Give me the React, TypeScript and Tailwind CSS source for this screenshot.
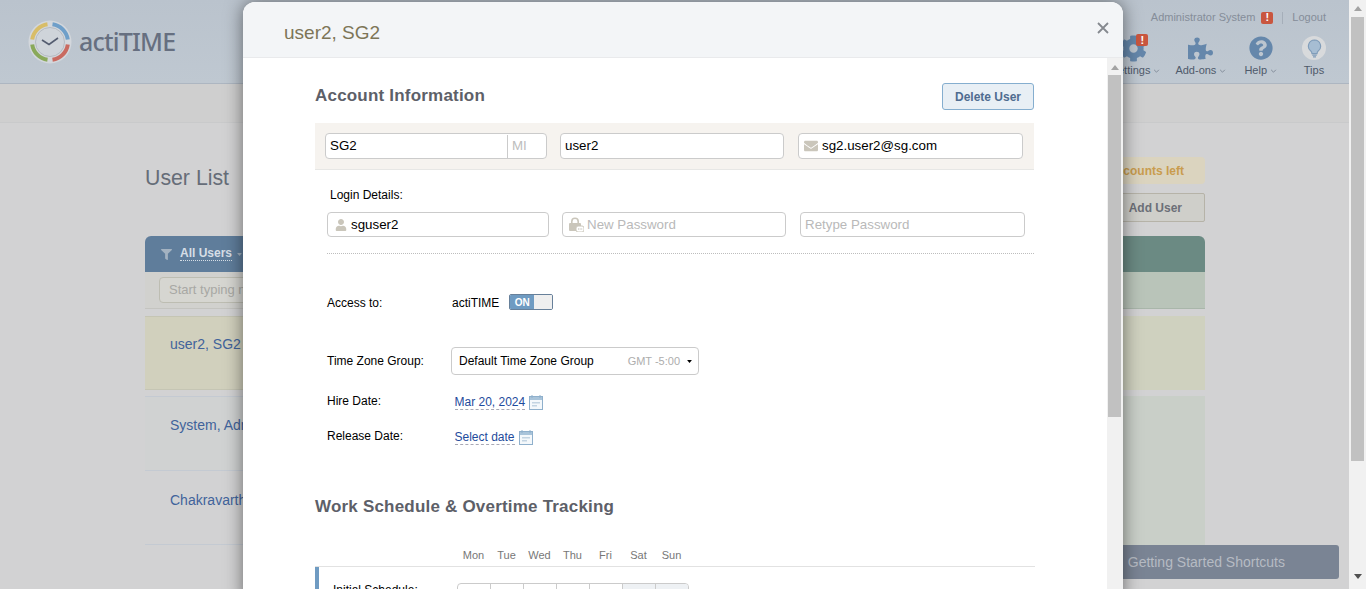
import { FaCog, FaPuzzlePiece, FaQuestionCircle, FaUser, FaEnvelope, FaFilter } from "react-icons/fa";

function Bang({ className }: { className: string }) {
  return <span className={"flex items-center justify-center rounded-[2px] bg-[#c9563f] text-white font-bold text-[11px] leading-none " + className}>!</span>;
}

function Caret({ className }: { className: string }) {
  return (
    <svg viewBox="0 0 8 5" className={className} width="7" height="4">
      <path d="M1 1l3 3 3-3" fill="none" stroke="currentColor" strokeWidth="1.1" />
    </svg>
  );
}

function Arrow({ up, className }: { up?: boolean; className: string }) {
  return (
    <svg viewBox="0 0 8 5" width="8" height="5" className={className}>
      <path d={up ? "M4 0L8 5H0z" : "M0 0h8L4 5z"} fill="currentColor" />
    </svg>
  );
}

function Logo() {
  return (
    <svg viewBox="0 0 44 44" width="44" height="44" className="shrink-0">
      <circle cx="22" cy="22" r="21.5" fill="#d3d7dc" />
      <g fill="none" strokeWidth="4">
        <path d="M4.2 19.5A18 18 0 0 1 19.5 4.2" stroke="#d8bd68" />
        <path d="M24.5 4.2A18 18 0 0 1 39.8 19.5" stroke="#6f9fc9" />
        <path d="M39.8 24.5A18 18 0 0 1 24.5 39.8" stroke="#c96a60" />
        <path d="M19.5 39.8A18 18 0 0 1 4.2 24.5" stroke="#8aa95a" />
      </g>
      <circle cx="22" cy="22" r="14.5" fill="#cfd4da" stroke="#aeb4bb" strokeWidth="0.8" />
      <path d="M14 20l7 4.5L30 18" fill="none" stroke="#545c70" strokeWidth="1.6" />
    </svg>
  );
}

function Calendar() {
  return (
    <svg viewBox="0 0 14 16" width="14" height="16" className="shrink-0">
      <rect x="0.5" y="2.5" width="13" height="13" fill="#f4f8fb" stroke="#8fb0cc" />
      <rect x="1" y="3" width="12" height="3" fill="#a9c4da" />
      <path d="M3 1v3M11 1v3" stroke="#8fb0cc" />
      <rect x="3" y="8" width="8" height="1.5" fill="#c3d4e2" />
      <rect x="3" y="11" width="5" height="1.5" fill="#c3d4e2" />
    </svg>
  );
}

function Bulb() {
  return (
    <svg viewBox="0 0 16 20" width="15" height="19">
      <path d="M8 1a6.5 6.5 0 0 0-4 11.6c.9.8 1.2 1.6 1.3 2.9h5.4c.1-1.3.4-2.1 1.3-2.9A6.5 6.5 0 0 0 8 1z" fill="#a6bdd3" stroke="#7f9cb9" strokeWidth="1.2" />
      <path d="M5.6 17h4.8M6.4 19h3.2" stroke="#7f9cb9" strokeWidth="1.3" />
    </svg>
  );
}

function LockIcon() {
  return (
    <svg viewBox="0 0 16 15" width="16" height="15" className="shrink-0">
      <path d="M3 6V4.5a4 4 0 0 1 8 0V6h-1.6V4.5a2.4 2.4 0 0 0-4.8 0V6z" fill="#cac6bb" />
      <rect x="1" y="6" width="12" height="8" rx="1" fill="#cac6bb" />
      <rect x="8" y="9" width="8" height="6" rx="2" fill="#fff" stroke="#cac6bb" />
      <path d="M10 12h.8M11.7 12h.8M13.4 12h.8" stroke="#a9a59a" />
    </svg>
  );
}

function NavItem({ icon, label, caret }: { icon: React.ReactNode; label: string; caret?: boolean }) {
  return (
    <div className="flex flex-col items-center">
      <div className="h-[30px] flex items-center justify-center">{icon}</div>
      <div className="mt-[1px] flex items-center gap-[3px] text-[11px] leading-[13px] text-[#4f5a6b]">
        {label}
        {caret && <Caret className="text-[#7c8694]" />}
      </div>
    </div>
  );
}

function Box({ className, children }: { className: string; children?: React.ReactNode }) {
  return <div className={"flex items-center bg-white border border-[#cbcbcb] rounded-[4px] text-[13.33px] " + className}>{children}</div>;
}

function Label({ children, className }: { children: React.ReactNode; className: string }) {
  return <div className={"text-[12px] leading-[14px] text-black " + className}>{children}</div>;
}

const days = ["Mon", "Tue", "Wed", "Thu", "Fri", "Sat", "Sun"];

export default function App() {
  return (
    <div className="relative flex h-[589px] w-[1366px] overflow-hidden font-['Liberation_Sans',Arial,sans-serif]">
      {/* page behind the dialog */}
      <div className="flex h-full w-[1349px] flex-col bg-[#d2d2d3]">
        <header className="flex h-[84px] shrink-0 justify-between border-b border-[#adb6c1] bg-gradient-to-b from-[#bac3cd] to-[#bfc8d1] pl-[28px] pr-[23px]">
          <div className="mt-[20px] flex h-[44px] items-center gap-[7px]">
            <Logo />
            <span className="mb-[1px] font-['Noto_Sans',sans-serif] text-[25px] font-medium leading-none tracking-[-0.8px] text-[#666f80]">actiTIME</span>
          </div>
          <div className="flex flex-col items-end">
            <div className="mt-[11px] flex h-[13px] items-center text-[11px] text-[#858d99]">
              Administrator System
              <Bang className="ml-[6px] h-[12px] w-[12px]" />
              <span className="mx-[9px] h-[12px] w-px bg-[#a5aeb9]" />
              Logout
            </div>
            <div className="mt-[9px] flex items-start">
              <div className="relative">
                <NavItem caret label="Settings" icon={<span className="pr-[4px]"><FaCog size={27} color="#6587ab" /></span>} />
                <Bang className="absolute right-[12px] top-[1px] h-[12px] w-[12px]" />
              </div>
              <div className="ml-[15px]">
                <NavItem caret label="Add-ons" icon={<FaPuzzlePiece size={25} color="#6587ab" />} />
              </div>
              <div className="ml-[18px]">
                <NavItem caret label="Help" icon={<FaQuestionCircle size={24} color="#6587ab" />} />
              </div>
              <div className="ml-[25px]">
                <NavItem
                  label="Tips"
                  icon={
                    <span className="flex h-[24px] w-[24px] items-center justify-center rounded-full bg-[#d8dadc]">
                      <Bulb />
                    </span>
                  }
                />
              </div>
            </div>
          </div>
        </header>
        <div className="h-[39px] shrink-0 border-b border-[#c9cacb] bg-[#cfcfcf]" />
        <main className="w-[1205px] pl-[145px]">
          <div className="flex items-start justify-between pt-[34px]">
            <h1 className="mt-[8px] text-[21.3px] leading-[26px] text-[#666d78]">User List</h1>
            <div className="flex flex-col items-end">
              <div className="flex h-[27px] w-[200px] items-center justify-end rounded-[4px] bg-[#dbd4bf] pr-[21px] text-[12px] font-bold text-[#c99c4e]">
                accounts left
              </div>
              <div className="mt-[9px] flex h-[29px] w-[100px] items-center justify-end rounded-[2px] border border-[#b6b3a8] bg-[#cfcfca] pr-[22px] text-[12px] font-bold text-[#6c6f78]">
                Add User
              </div>
            </div>
          </div>
          <div className="mt-[14px] flex">
            <div className="w-[530px]">
              <div className="flex h-[36px] items-center rounded-tl-[6px] bg-[#5f7d9b] pl-[16px] text-[12px] font-bold text-[#d6dee6]">
                <FaFilter size={11} color="#a3b2c1" />
                <span className="ml-[8px] border-b border-dotted border-[#d6dee6] leading-[13px]">All Users</span>
                <Arrow className="ml-[5px] h-[3px] w-[5px] text-[#a3b2c1]" />
              </div>
              <div className="flex h-[37px] items-center border-b border-[#c4c4c0] bg-[#d1d1ce] pl-[14px]">
                <div className="flex h-[26px] w-[200px] items-center rounded-[4px] border border-[#bdbdb2] bg-[#d6d6d1] pl-[9px] text-[13px] text-[#a8a8a4]">
                  Start typing name
                </div>
              </div>
              <div className="mt-[7px] h-[74px] border-y border-[#c5c5b4] bg-[#d1d0bd] pl-[25px] pt-[18px] text-[14px] leading-[18px] text-[#41639b]">user2, SG2</div>
              <div className="mt-[6px] h-[75px] border-y border-[#c4cad2] bg-[#d0d2d2] pl-[25px] pt-[19px] text-[14px] leading-[18px] text-[#41639b]">System, Administrator</div>
              <div className="h-[74px] border-b border-[#c4cad2] pl-[25px] pt-[20px] text-[14px] leading-[18px] text-[#41639b]">Chakravarthi</div>
            </div>
            <div className="flex-1">
              <div className="h-[36px] rounded-tr-[6px] bg-[#6b8a83]" />
              <div className="h-[37px] border-b border-[#a9b6aa] bg-[#b9c4b9]" />
              <div className="mt-[7px] h-[74px] bg-[#cfd1bf]" />
              <div className="mt-[6px] h-[149px] bg-[#c9cfc8]" />
            </div>
          </div>
        </main>
      </div>

      {/* browser scrollbar */}
      <div className="flex h-full w-[17px] flex-col items-center bg-[#f1f1f1]">
        <Arrow up className="mt-[6px] text-[#a3a3a3]" />
        <div className="mt-[6px] h-[444px] w-[13px] bg-[#c1c1c1]" />
        <Arrow className="mt-[113px] text-[#505050]" />
      </div>

      {/* shortcuts tab */}
      <div className="absolute left-[1000px] top-[545px] flex h-[34px] w-[339px] items-center justify-end rounded-[3px] bg-[#7a8494] pr-[54px] text-[14px] text-[#b6bbc3]">
        Getting Started Shortcuts
      </div>

      {/* dialog */}
      <div className="absolute left-[243px] top-[2px] flex h-[600px] w-[880px] flex-col rounded-t-[12px] bg-white shadow-[0_0_18px_rgba(0,0,0,0.5)]">
        <div className="flex h-[56px] shrink-0 items-center justify-between rounded-t-[12px] border-b border-[#e9eaec] bg-[#f3f5f7] pl-[41px] pr-[14px]">
          <span className="mt-[7px] text-[19px] leading-[22px] text-[#7d7557]">user2, SG2</span>
          <svg viewBox="0 0 12 12" width="12" height="12" className="mb-[3px]">
            <path d="M1 1l10 10M11 1L1 11" stroke="#85898f" strokeWidth="1.8" />
          </svg>
        </div>
        <div className="flex min-h-0 flex-1">
          <div className="w-[864px] overflow-hidden pl-[72px] pr-[73px]">
            <div className="flex h-[65px] items-start justify-between pt-[25px]">
              <h2 className="pt-[3px] text-[17px] font-bold leading-[20px] tracking-[0.2px] text-[#5d6068]">Account Information</h2>
              <div className="flex h-[27px] w-[92px] items-center justify-center rounded-[3px] border border-[#85aecf] bg-[#e8eff5] text-[12px] font-bold text-[#4f6c90]">Delete User</div>
            </div>
            <div className="flex h-[47px] items-center border-b border-[#e7e7e5] bg-[#f6f3ef] pb-[1px] pl-[10px]">
              <Box className="h-[26px] w-[222px] overflow-hidden pt-[1px]">
                <span className="flex-1 pl-[4px] text-black">SG2</span>
                <span className="flex h-full w-[39px] items-center border-l border-[#cbcbcb] pl-[4px] text-[#bdbdbd]">MI</span>
              </Box>
              <Box className="ml-[13px] h-[26px] w-[224px] pl-[4px] pt-[1px] text-black">user2</Box>
              <Box className="ml-[14px] h-[26px] w-[225px] pl-[5px] pt-[1px] text-black">
                <FaEnvelope size={14} color="#cac6bb" />
                <span className="ml-[4px]">sg2.user2@sg.com</span>
              </Box>
            </div>
            <Label className="ml-[15px] mt-[18px]">Login Details:</Label>
            <div className="ml-[12px] mt-[10px] flex">
              <Box className="h-[25px] w-[222px] pl-[7px] text-black">
                <FaUser size={12} color="#cac6bb" />
                <span className="ml-[4px]">sguser2</span>
              </Box>
              <Box className="ml-[13px] h-[25px] w-[224px] pl-[5px] text-[#b9b9b9]">
                <LockIcon />
                <span className="ml-[3px]">New Password</span>
              </Box>
              <Box className="ml-[14px] h-[25px] w-[225px] pl-[4px] text-[#b9b9b9]">Retype Password</Box>
            </div>
            <div className="ml-[12px] mt-[16px] border-b border-dotted border-[#bdbdbd]" />

            <div className="ml-[12px] mt-[40px] flex h-[16px] items-center">
              <Label className="mt-[1px] w-[125px]">Access to:</Label>
              <span className="mt-[1px] text-[12px] text-black">actiTIME</span>
              <div className="ml-[10px] flex h-[16px] w-[44px] overflow-hidden rounded-[2px] border border-[#67809a]">
                <span className="flex w-[24px] items-center justify-center bg-[#6f9bc2] text-[10px] font-bold text-white">ON</span>
                <span className="flex-1 bg-[#efefef]" />
              </div>
            </div>

            <div className="ml-[12px] mt-[37px] flex h-[28px] items-center">
              <Label className="w-[124px]">Time Zone Group:</Label>
              <div className="flex h-[28px] w-[248px] items-center rounded-[4px] border border-[#cbcbcb] pl-[7px] pr-[6px] text-[12px] text-black">
                <span className="flex-1">Default Time Zone Group</span>
                <span className="text-[11px] text-[#adadad]">GMT -5:00</span>
                <Arrow className="ml-[7px] h-[3px] w-[5px] text-black" />
              </div>
            </div>

            <div className="ml-[12px] mt-[18px] flex h-[18px] items-center">
              <Label className="mb-[3px] w-[127.5px]">Hire Date:</Label>
              <span className="border-b border-dashed border-[#a9a9b5] text-[12px] leading-[14px] text-[#1e4b9c]">Mar 20, 2024</span>
              <span className="ml-[4px]"><Calendar /></span>
            </div>
            <div className="ml-[12px] mt-[17px] flex h-[18px] items-center">
              <Label className="mb-[3px] w-[127.5px]">Release Date:</Label>
              <span className="border-b border-dashed border-[#a9a9b5] text-[12px] leading-[14px] text-[#1e4b9c]">Select date</span>
              <span className="ml-[4px]"><Calendar /></span>
            </div>

            <h2 className="mt-[51px] text-[17px] font-bold leading-[20px] tracking-[0.2px] text-[#5d6068]">Work Schedule &amp; Overtime Tracking</h2>
            <div className="ml-[142px] mt-[32px] flex">
              {days.map((d) => (
                <span key={d} className="w-[33px] text-center text-[11px] leading-[13px] text-[#777]">{d}</span>
              ))}
            </div>
            <div className="mt-[4px] flex h-[40px] w-[720px] border-t border-[#e2e2e2]">
              <div className="h-full w-[4px] bg-[#6f9bc2]" />
              <Label className="ml-[14px] mt-[16px] w-[124px]">Initial Schedule:</Label>
              <div className="mt-[16px] flex h-[30px] w-[232px] overflow-hidden rounded-[4px] border border-[#cbcbcb]">
                {days.map((d, i) => (
                  <span key={d} className={i > 4 ? "h-full flex-1 border-r border-[#cbcbcb] bg-[#eef1f4] last:border-r-0" : "h-full flex-1 border-r border-[#cbcbcb] last:border-r-0"} />
                ))}
              </div>
            </div>
          </div>
          <div className="flex h-full w-[16px] flex-col bg-[#f1f1f1] pl-[1px]">
            <Arrow up className="ml-[3px] mt-[7px] text-[#a3a3a3]" />
            <div className="mt-[5px] h-[342px] w-[13px] bg-[#c1c1c1]" />
          </div>
        </div>
      </div>
    </div>
  );
}
